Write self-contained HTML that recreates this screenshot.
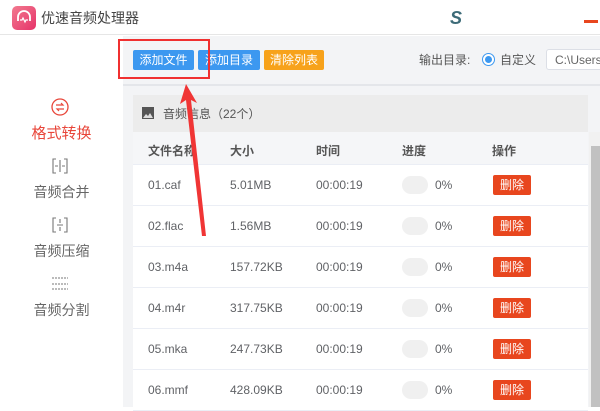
<!DOCTYPE html>
<html><head><meta charset="utf-8"><style>
*{margin:0;padding:0;box-sizing:border-box}
body{width:600px;height:407px;overflow:hidden;background:#fff;font-family:"Liberation Sans","Noto Sans CJK SC",sans-serif;position:relative;color:#606266}
.abs{position:absolute}
.btn{position:absolute;top:50px;height:20px;color:#fff;font-size:12px;line-height:20px;text-align:center;border-radius:2px}
.row{position:absolute;left:133px;width:455px;height:41px;background:#fff;border-bottom:1px solid #ebeef5;font-size:12px;color:#606266}
.row span{position:absolute;top:13px}
.del{position:absolute;left:360px;top:10px;width:38px;height:20px;background:#e8461e;color:#fff;border-radius:2px;text-align:center;line-height:20px;font-size:12px}
.bar{position:absolute;left:269px;top:11px;width:26px;height:18px;border-radius:9px;background:#f0f0f0}
.side{position:absolute;left:0;width:123px;text-align:center;font-size:14px;color:#666}
</style></head><body>
<div class="abs" style="left:0;top:0;width:600px;height:35px;background:#fff;border-bottom:1px solid #e6e6e6"></div>
<div class="abs" style="left:12px;top:6px;width:24px;height:24px;border-radius:5px;background:linear-gradient(135deg,#f27a8f,#e6336a)"></div>
<svg class="abs" style="left:12px;top:6px" width="24" height="24" viewBox="0 0 24 24"><path d="M6 15V11a6 6 0 0 1 12 0v4" fill="none" stroke="#fff" stroke-width="1.8"/><path d="M8 14l2 0 1-2 2 4 1-2 2 0" fill="none" stroke="#fff" stroke-width="1.2"/></svg>
<div class="abs" style="left:41px;top:8px;font-size:14px;color:#444">优速音频处理器</div>
<div class="abs" style="left:450px;top:8px;font-size:18px;font-weight:bold;color:#3d6b78;font-style:italic">S</div>
<div class="abs" style="left:584px;top:20px;width:14px;height:3px;background:#e8461e"></div>
<div class="abs" style="left:123px;top:36px;width:477px;height:371px;background:#f3f4f6"></div>
<div class="abs" style="left:123px;top:84px;width:477px;height:2px;background:#e4e6ea"></div>
<div class="btn" style="left:133px;width:61px;background:#3c98f0">添加文件</div>
<div class="btn" style="left:198px;width:62px;background:#3c98f0">添加目录</div>
<div class="btn" style="left:264px;width:60px;background:#f7a21b">清除列表</div>
<div class="abs" style="left:419px;top:51px;font-size:12px;color:#555">输出目录:</div>
<div class="abs" style="left:482px;top:53px;width:13px;height:13px;border-radius:50%;border:1px solid #3c98f0;background:#fff"></div>
<div class="abs" style="left:485px;top:56px;width:7px;height:7px;border-radius:50%;background:#3c98f0"></div>
<div class="abs" style="left:500px;top:51px;font-size:12px;color:#555">自定义</div>
<div class="abs" style="left:546px;top:49px;width:60px;height:21px;background:#fff;border:1px solid #dcdfe6;border-radius:3px;font-size:12px;color:#666;padding:3px 0 0 8px">C:\Users</div>
<div class="abs" style="left:133px;top:95px;width:455px;height:37px;background:#ececec"></div>
<svg class="abs" style="left:142px;top:107px" width="12" height="12" viewBox="0 0 12 12"><rect x="0" y="0" width="12" height="12" fill="#555"/><path d="M1 11l3-4 2 2 2-3 3 5z" fill="#ddd"/></svg>
<div class="abs" style="left:163px;top:105px;font-size:12px;color:#555">音频信息（22个）</div>
<div class="abs" style="left:133px;top:132px;width:455px;height:33px;background:#f5f6f8;border-bottom:1px solid #ebeef5;font-size:12px;font-weight:bold;color:#555">
<span class="abs" style="left:15px;top:10px">文件名称</span><span class="abs" style="left:97px;top:10px">大小</span><span class="abs" style="left:183px;top:10px">时间</span><span class="abs" style="left:269px;top:10px">进度</span><span class="abs" style="left:359px;top:10px">操作</span></div>
<div class="row" style="top:165px"><span style="left:15px">01.caf</span><span style="left:97px">5.01MB</span><span style="left:183px">00:00:19</span><div class="bar"></div><span style="left:302px">0%</span><div class="del">删除</div></div>
<div class="row" style="top:206px"><span style="left:15px">02.flac</span><span style="left:97px">1.56MB</span><span style="left:183px">00:00:19</span><div class="bar"></div><span style="left:302px">0%</span><div class="del">删除</div></div>
<div class="row" style="top:247px"><span style="left:15px">03.m4a</span><span style="left:97px">157.72KB</span><span style="left:183px">00:00:19</span><div class="bar"></div><span style="left:302px">0%</span><div class="del">删除</div></div>
<div class="row" style="top:288px"><span style="left:15px">04.m4r</span><span style="left:97px">317.75KB</span><span style="left:183px">00:00:19</span><div class="bar"></div><span style="left:302px">0%</span><div class="del">删除</div></div>
<div class="row" style="top:329px"><span style="left:15px">05.mka</span><span style="left:97px">247.73KB</span><span style="left:183px">00:00:19</span><div class="bar"></div><span style="left:302px">0%</span><div class="del">删除</div></div>
<div class="row" style="top:370px"><span style="left:15px">06.mmf</span><span style="left:97px">428.09KB</span><span style="left:183px">00:00:19</span><div class="bar"></div><span style="left:302px">0%</span><div class="del">删除</div></div>
<div class="abs" style="left:589px;top:132px;width:11px;height:275px;background:#f1f1f1"></div>
<div class="abs" style="left:591px;top:146px;width:9px;height:261px;background:#c1c1c1"></div>
<svg class="abs" style="left:50px;top:97px" width="20" height="20" viewBox="0 0 20 20"><circle cx="10" cy="10" r="8" fill="none" stroke="#e8463a" stroke-width="1.3"/><path d="M6 8h7l-2-2M14 12H7l2 2" fill="none" stroke="#e8463a" stroke-width="1.2"/></svg>
<div class="side" style="top:122px;color:#e8463a;font-size:15px">格式转换</div>
<svg class="abs" style="left:51px;top:157px" width="18" height="18" viewBox="0 0 18 18"><path d="M5 2H2v14h3M13 2h3v14h-3M9 3v12M4 9h3M14 9h-3" fill="none" stroke="#777" stroke-width="1.1"/></svg>
<div class="side" style="top:182px">音频合并</div>
<svg class="abs" style="left:51px;top:216px" width="18" height="18" viewBox="0 0 18 18"><path d="M5 2H2v14h3M13 2h3v14h-3M6 9h6M9 3v4M9 11v4" fill="none" stroke="#777" stroke-width="1.1"/></svg>
<div class="side" style="top:241px">音频压缩</div>
<svg class="abs" style="left:51px;top:275px" width="18" height="16" viewBox="0 0 18 16"><path d="M1 3h16M1 9h16M1 14h16" fill="none" stroke="#777" stroke-width="1" stroke-dasharray="2 1"/></svg>
<div class="side" style="top:300px">音频分割</div>
<div class="abs" style="left:118px;top:39px;width:92px;height:40px;border:2px solid #f03030"></div>
<svg class="abs" style="left:0;top:0" width="600" height="407"><path d="M186 84L197 103L191 100L206 236L202 236L186 100L180 104Z" fill="#f03535"/></svg>
</body></html>
